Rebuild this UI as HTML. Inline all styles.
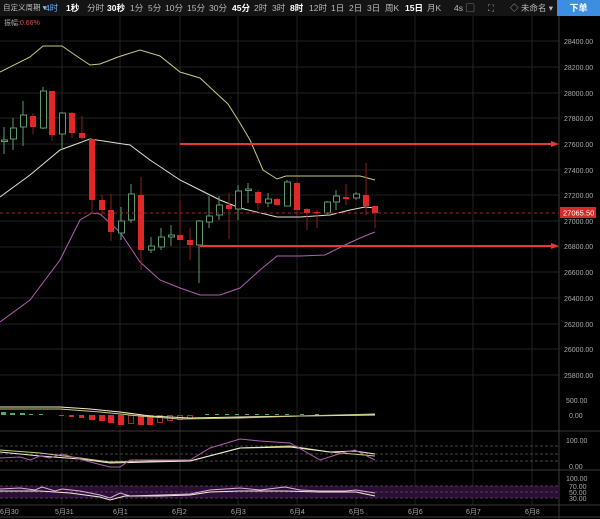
<!DOCTYPE html>
<html><head><meta charset="utf-8"><style>
body{margin:0;width:600px;height:519px;background:#000;overflow:hidden;font-family:"Liberation Sans","Noto Sans CJK SC",sans-serif}
.top{position:absolute;left:0;top:0;width:600px;height:16px;background:#141414;color:#bbb;font-size:8.5px;line-height:16px;white-space:nowrap}
.top span{position:absolute;top:0}
.w{color:#fff;font-weight:bold}
.btn{position:absolute;right:0;top:0;width:43px;height:16px;background:#3d8de0;color:#fff;text-align:center;font-weight:bold;font-size:9px}
svg{position:absolute;left:0;top:0}
</style></head><body>
<svg width="600" height="519" font-family="Liberation Sans, Noto Sans CJK SC, sans-serif">
<g stroke="#222" stroke-width="1">
<line x1="62" y1="16" x2="62" y2="505"/><line x1="120" y1="16" x2="120" y2="505"/><line x1="180" y1="16" x2="180" y2="505"/><line x1="238" y1="16" x2="238" y2="505"/><line x1="297" y1="16" x2="297" y2="505"/><line x1="356" y1="16" x2="356" y2="505"/><line x1="415" y1="16" x2="415" y2="505"/><line x1="473" y1="16" x2="473" y2="505"/><line x1="532" y1="16" x2="532" y2="505"/>
<line x1="0" y1="41" x2="559" y2="41"/><line x1="0" y1="67" x2="559" y2="67"/><line x1="0" y1="93" x2="559" y2="93"/><line x1="0" y1="118" x2="559" y2="118"/><line x1="0" y1="144" x2="559" y2="144"/><line x1="0" y1="170" x2="559" y2="170"/><line x1="0" y1="195" x2="559" y2="195"/><line x1="0" y1="221" x2="559" y2="221"/><line x1="0" y1="247" x2="559" y2="247"/><line x1="0" y1="272" x2="559" y2="272"/><line x1="0" y1="298" x2="559" y2="298"/><line x1="0" y1="324" x2="559" y2="324"/><line x1="0" y1="349" x2="559" y2="349"/><line x1="0" y1="375" x2="559" y2="375"/>
</g>
<g stroke="#3a3a3a"><line x1="559" y1="16" x2="559" y2="519"/><line x1="0" y1="431" x2="600" y2="431"/><line x1="0" y1="470" x2="600" y2="470"/><line x1="0" y1="505" x2="600" y2="505"/><line x1="0" y1="517" x2="600" y2="517"/></g>
<polyline fill="none" stroke="#c9c97c" stroke-width="1" points="0,72 30,57 43,46 62,46 75,55 90,65 100,64 118,57 140,50 160,56 180,72 200,78 215,92 228,104 240,123 250,140 263,170 277,179 286,176 360,176 375,180"/>
<polyline fill="none" stroke="#e0e0d0" stroke-width="1" points="0,197 30,175 60,150 90,139 110,142 130,145 150,160 180,180 200,190 220,200 240,208 277,217 300,217 330,215 350,210 365,207 375,208"/>
<polyline fill="none" stroke="#b060b0" stroke-width="1" points="0,322 30,300 60,260 80,220 92,213 100,214 120,232 140,262 160,280 180,288 200,295 220,295 240,288 260,270 277,256 300,256 325,255 345,245 360,238 375,232"/>
<g stroke-width="1">
<g stroke="#5c9a70" fill="#000">
<line x1="4" y1="127" x2="4" y2="154"/><rect x="1.5" y="140" width="6" height="1.5"/>
<line x1="13" y1="118" x2="13" y2="150"/><rect x="10.5" y="128" width="6" height="11"/>
<line x1="23" y1="101" x2="23" y2="146"/><rect x="20.5" y="115" width="6" height="12"/>
<line x1="43" y1="87" x2="43" y2="129"/><rect x="40.5" y="91" width="6" height="37"/>
<line x1="62" y1="112" x2="62" y2="150"/><rect x="59.5" y="113" width="6" height="21"/>
<line x1="121" y1="207" x2="121" y2="240"/><rect x="118.5" y="221" width="6" height="12"/>
<line x1="131" y1="184" x2="131" y2="223"/><rect x="128.5" y="194" width="6" height="26"/>
<line x1="151" y1="237" x2="151" y2="253"/><rect x="148.5" y="246" width="6" height="4"/>
<line x1="161" y1="228" x2="161" y2="250"/><rect x="158.5" y="237" width="6" height="10"/>
<line x1="171" y1="225" x2="171" y2="246"/><rect x="168.5" y="235" width="6" height="2"/>
<line x1="199" y1="220" x2="199" y2="283"/><rect x="196.5" y="221" width="6" height="24"/>
<line x1="209" y1="196" x2="209" y2="228"/><rect x="206.5" y="216" width="6" height="6"/>
<line x1="219" y1="196" x2="219" y2="220"/><rect x="216.5" y="205" width="6" height="10"/>
<line x1="238" y1="185" x2="238" y2="220"/><rect x="235.5" y="191" width="6" height="18"/>
<line x1="248" y1="183" x2="248" y2="203"/><rect x="245.5" y="189" width="6" height="1.5"/>
<line x1="268" y1="193" x2="268" y2="207"/><rect x="265.5" y="199" width="6" height="4"/>
<line x1="287" y1="180" x2="287" y2="206"/><rect x="284.5" y="182" width="6" height="24"/>
<line x1="327" y1="201" x2="327" y2="216"/><rect x="324.5" y="202" width="6" height="11"/>
<line x1="336" y1="190" x2="336" y2="210"/><rect x="333.5" y="196" width="6" height="6"/>
<line x1="356" y1="192" x2="356" y2="200"/><rect x="353.5" y="194" width="6" height="4"/>
</g>
<g stroke="#8a2020" fill="#e02828">
<line x1="33" y1="113" x2="33" y2="134"/><rect x="30" y="116" width="6" height="11" stroke="none"/>
<line x1="52" y1="91" x2="52" y2="141"/><rect x="49" y="91" width="6" height="44" stroke="none"/>
<line x1="72" y1="112" x2="72" y2="138"/><rect x="69" y="113" width="6" height="20" stroke="none"/>
<line x1="82" y1="116" x2="82" y2="140"/><rect x="79" y="133" width="6" height="5" stroke="none"/>
<line x1="92" y1="138" x2="92" y2="214"/><rect x="89" y="139" width="6" height="61" stroke="none"/>
<line x1="102" y1="195" x2="102" y2="215"/><rect x="99" y="200" width="6" height="10" stroke="none"/>
<line x1="111" y1="194" x2="111" y2="241"/><rect x="108" y="210" width="6" height="22" stroke="none"/>
<line x1="141" y1="177" x2="141" y2="270"/><rect x="138" y="195" width="6" height="55" stroke="none"/>
<line x1="180" y1="200" x2="180" y2="240"/><rect x="177" y="235" width="6" height="5" stroke="none"/>
<line x1="190" y1="228" x2="190" y2="260"/><rect x="187" y="240" width="6" height="5" stroke="none"/>
<line x1="229" y1="193" x2="229" y2="239"/><rect x="226" y="205" width="6" height="4" stroke="none"/>
<line x1="258" y1="190" x2="258" y2="210"/><rect x="255" y="192" width="6" height="11" stroke="none"/>
<line x1="277" y1="198" x2="277" y2="206"/><rect x="274" y="199" width="6" height="6" stroke="none"/>
<line x1="297" y1="182" x2="297" y2="215"/><rect x="294" y="183" width="6" height="27" stroke="none"/>
<line x1="307" y1="208" x2="307" y2="230"/><rect x="304" y="209" width="6" height="4" stroke="none"/>
<line x1="317" y1="210" x2="317" y2="228"/><rect x="314" y="212" width="6" height="1.5" stroke="none"/>
<line x1="346" y1="184" x2="346" y2="205"/><rect x="343" y="197" width="6" height="2" stroke="none"/>
<line x1="366" y1="163" x2="366" y2="215"/><rect x="363" y="195" width="6" height="11" stroke="none"/>
<line x1="375" y1="207" x2="375" y2="228"/><rect x="372" y="206" width="6" height="7" stroke="none"/>
</g></g>
<line x1="0" y1="213" x2="559" y2="213" stroke="#a02828" stroke-dasharray="3,3"/>
<rect x="560" y="207" width="36" height="11" fill="#d42a2a"/>
<text x="563" y="215.5" font-size="7.5" fill="#fff">27065.50</text>
<line x1="180" y1="144" x2="552" y2="144" stroke="#e83a32" stroke-width="2"/><polygon points="551,141 559,144 551,147" fill="#e83a32"/>
<line x1="200" y1="246" x2="552" y2="246" stroke="#e83a32" stroke-width="2"/><polygon points="551,243 559,246 551,249" fill="#e83a32"/>
<g font-size="7" fill="#aaa">
<text x="564" y="44">28400.00</text><text x="564" y="70">28200.00</text><text x="564" y="96">28000.00</text><text x="564" y="121">27800.00</text><text x="564" y="147">27600.00</text><text x="564" y="173">27400.00</text><text x="564" y="198">27200.00</text><text x="564" y="224">27000.00</text><text x="564" y="249">26800.00</text><text x="564" y="275">26600.00</text><text x="564" y="301">26400.00</text><text x="564" y="327">26200.00</text><text x="564" y="352">26000.00</text><text x="564" y="378">25800.00</text><text x="566" y="403">500.00</text>
<text x="569" y="418">0.00</text><text x="566" y="443">100.00</text><text x="569" y="469">0.00</text>
<text x="566" y="481">100.00</text><text x="569" y="489">70.00</text><text x="569" y="495">50.00</text><text x="569" y="501">30.00</text>
<text x="0" y="514">6月30</text><text x="55" y="514">5月31</text><text x="113" y="514">6月1</text><text x="172" y="514">6月2</text><text x="231" y="514">6月3</text><text x="290" y="514">6月4</text><text x="349" y="514">6月5</text><text x="408" y="514">6月6</text><text x="466" y="514">6月7</text><text x="525" y="514">6月8</text>
</g>
<text x="4" y="25" font-size="7" fill="#aaa">振幅:<tspan fill="#e05050">0.66%</tspan></text>
<g fill="#4caf6a"><rect x="1" y="412" width="5" height="3"/><rect x="10" y="413" width="5" height="2"/><rect x="20" y="413" width="5" height="2"/><rect x="29" y="414" width="4" height="1"/><rect x="39" y="414" width="4" height="1"/><rect x="205" y="414" width="4" height="1"/><rect x="215" y="414" width="4" height="1"/><rect x="225" y="414" width="4" height="1"/><rect x="235" y="414" width="4" height="1"/><rect x="245" y="414" width="4" height="1"/><rect x="255" y="414" width="4" height="1"/><rect x="265" y="414" width="4" height="1"/><rect x="275" y="414" width="4" height="1"/><rect x="285" y="414" width="4" height="1"/><rect x="300" y="414" width="4" height="1"/><rect x="315" y="414" width="4" height="1"/></g>
<g fill="#e02828"><rect x="59" y="415" width="5" height="1"/><rect x="69" y="415" width="5" height="2"/><rect x="79" y="415" width="5" height="3"/><rect x="89" y="415" width="6" height="5"/><rect x="99" y="415" width="6" height="6"/><rect x="108" y="415" width="6" height="8"/><rect x="118" y="415" width="6" height="10"/><rect x="138" y="415" width="6" height="10"/><rect x="147" y="415" width="6" height="10"/></g>
<g fill="none" stroke="#a03030"><rect x="128.5" y="415.5" width="5" height="8"/><rect x="157.5" y="415.5" width="5" height="7"/><rect x="167.5" y="415.5" width="5" height="5"/><rect x="177.5" y="415.5" width="5" height="4"/><rect x="187.5" y="415.5" width="5" height="3"/></g>
<polyline fill="none" stroke="#eeeed0" points="0,407 60,407 90,409 120,412 150,416 190,418 240,417 300,416 375,415"/>
<polyline fill="none" stroke="#c9c97c" points="0,409 60,409 100,412 140,416 180,419 240,418 300,416 375,414"/>
<g stroke="#444" stroke-dasharray="3,2"><line x1="0" y1="446" x2="559" y2="446"/><line x1="0" y1="454" x2="559" y2="454"/><line x1="0" y1="461" x2="559" y2="461"/></g>
<polyline fill="none" stroke="#c9c97c" points="0,450 40,453 80,458 110,462 150,461 190,461 240,448 290,446 330,452 375,456"/>
<polyline fill="none" stroke="#eeeed0" points="0,452 40,456 80,459 110,463 150,462 190,461 240,448 290,447 330,452 355,451 375,454"/>
<polyline fill="none" stroke="#b060b0" points="0,458 20,457 30,460 40,456 50,458 62,454 90,462 110,467 120,467 130,460 160,460 190,460 210,448 240,439 260,441 290,443 320,460 345,452 355,450 375,460"/>
<rect x="0" y="486" width="559" height="12" fill="#2a0f33"/>
<g stroke="#553a66" stroke-dasharray="3,2"><line x1="0" y1="486" x2="559" y2="486"/><line x1="0" y1="492" x2="559" y2="492"/><line x1="0" y1="498" x2="559" y2="498"/></g>
<polyline fill="none" stroke="#e0b0e0" points="0,489 20,488 35,490 42,487 55,491 62,489 80,491 100,495 110,498 120,493 130,496 160,495 190,494 210,490 240,488 260,490 285,487 300,490 320,491 345,491 356,490 375,493"/>
<polyline fill="none" stroke="#eeeed0" points="0,491 40,491 70,493 100,497 110,500 125,496 160,496 190,495 210,492 240,491 285,491 320,492 356,492 375,496"/>
</svg>
<div class="top">
<span style="left:3px;font-size:7.5px">自定义周期 ▾</span>
<span style="left:45px;color:#6ab0ff">4时</span><span class="w" style="left:66px">1秒</span><span style="left:87px">分时</span><span class="w" style="left:107px">30秒</span><span style="left:130px">1分</span><span style="left:148px">5分</span><span style="left:165px">10分</span><span style="left:187px">15分</span><span style="left:209px">30分</span><span class="w" style="left:232px">45分</span><span style="left:254px">2时</span><span style="left:272px">3时</span><span class="w" style="left:290px">8时</span><span style="left:309px">12时</span><span style="left:331px">1日</span><span style="left:349px">2日</span><span style="left:367px">3日</span><span style="left:385px">周K</span><span class="w" style="left:405px">15日</span><span style="left:427px">月K</span><span style="left:454px">4s</span><span style="left:466px">▢</span><span style="left:488px">⛶</span><span style="left:510px">◇ 未命名 ▾</span>
<div class="btn">下单</div>
</div>
</body></html>
